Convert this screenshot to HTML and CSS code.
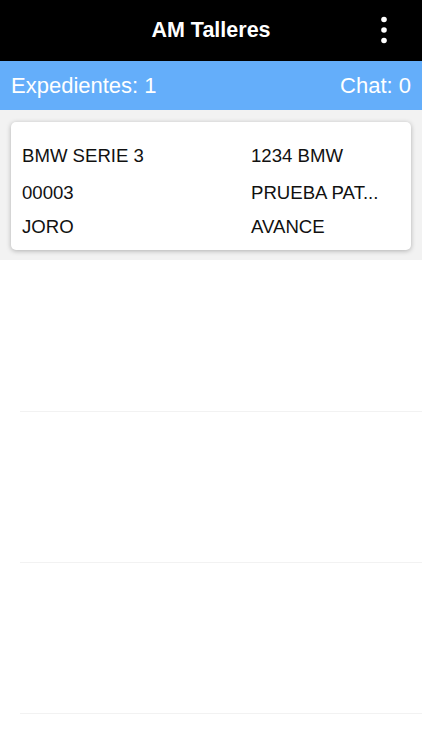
FILE: index.html
```html
<!DOCTYPE html>
<html lang="es">
<head>
    <meta charset="UTF-8">
    <title>AM Talleres</title>
    <link rel="stylesheet" href="styles.css">
</head>
<body>

<header class="topbar">
    <h1 class="topbar-title">AM Talleres</h1>
    <button class="menu-btn" aria-label="Menú">
        <svg width="8" height="30" viewBox="0 0 8 30">
            <circle cx="4" cy="4.5" r="2.8" fill="#fff"/>
            <circle cx="4" cy="15" r="2.8" fill="#fff"/>
            <circle cx="4" cy="25.5" r="2.8" fill="#fff"/>
        </svg>
    </button>
</header>

<div class="counters">
    <span>Expedientes: 1</span>
    <span>Chat: 0</span>
</div>

<div class="cards">
    <!-- Tarjeta de expediente -->
    <div class="card">
        <div class="card-row">
            <span class="col">BMW SERIE 3</span>
            <span class="col">1234 BMW</span>
        </div>
        <div class="card-row">
            <span class="col">00003</span>
            <span class="col">PRUEBA PAT...</span>
        </div>
        <div class="card-row">
            <span class="col">JORO</span>
            <span class="col">AVANCE</span>
        </div>
    </div>
</div>

<div class="empty-list">
    <div class="empty-row"></div>
    <div class="empty-row"></div>
    <div class="empty-row"></div>
</div>

</body>
</html>
```

FILE: styles.css
```css
body {
    margin: 0;
    font-family: "Liberation Sans", Arial, sans-serif;
    background: #fff;
    color: #111;
}

.topbar {
    height: 61px;
    background: #000;
    display: flex;
    align-items: center;
    justify-content: center;
    position: relative;
}

.topbar-title {
    margin: 0;
    color: #fff;
    font-size: 21.5px;
    font-weight: bold;
}

.menu-btn {
    position: absolute;
    right: 34px;
    top: 15px;
    background: none;
    border: none;
    padding: 0;
    line-height: 0;
}

.counters {
    height: 49px;
    background: #64aefa;
    color: #fff;
    display: flex;
    align-items: center;
    justify-content: space-between;
    padding: 0 11px;
    font-size: 22px;
}

.cards {
    background: #f2f2f2;
    padding: 12px 11px 10px;
}

.card {
    background: #fff;
    border-radius: 5px;
    box-shadow: 0 1px 5px rgba(0, 0, 0, 0.28);
    padding: 22px 11px 11px;
}

.card-row {
    display: flex;
    height: 24px;
    align-items: center;
    font-size: 18.6px;
}

.card-row:nth-child(1) {
    margin-bottom: 13px;
}

.card-row:nth-child(2) {
    margin-bottom: 10px;
}

.col:first-child {
    flex: 0 0 229px;
}

.col {
    flex: 1;
    white-space: nowrap;
}

.empty-list {
    padding: 1px 0 0 20px;
}

.empty-row {
    height: 150px;
    border-bottom: 1px solid #f2f2f2;
}
```
